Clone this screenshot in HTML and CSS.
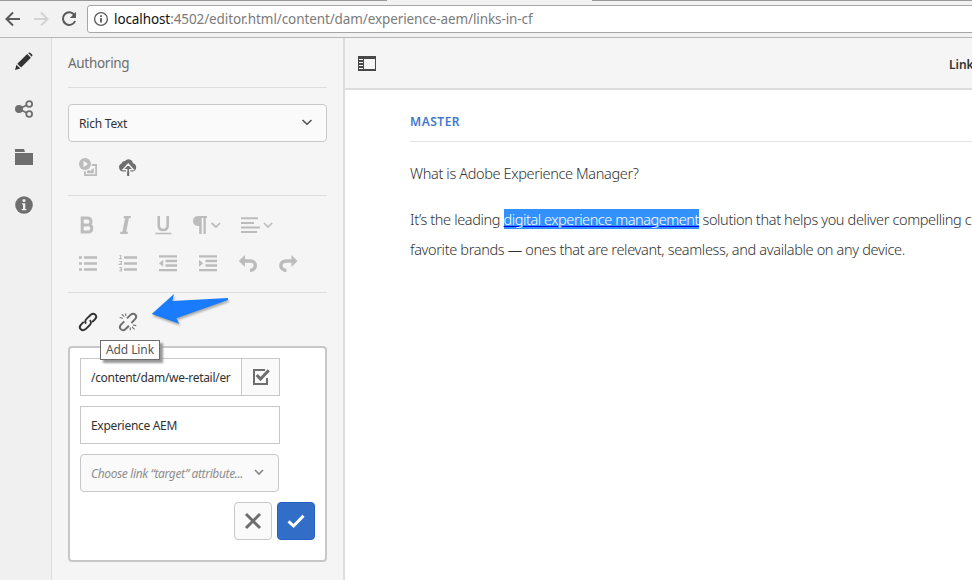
FILE: index.html
```html
<!DOCTYPE html>
<html lang="en">
<head>
<meta charset="utf-8">
<title>Links in CF</title>
<link rel="stylesheet" href="styles.css">
</head>
<body>
<header class="browser">
  <div class="tabs"><i class="tab-line left"></i><i class="tab-line right"></i></div>
  <div class="nav">
    <svg class="nav-icon" width="18" height="18" viewBox="0 0 18 18"><path d="M16 9H3M9 2.5L2.5 9L9 15.5" fill="none" stroke="#5a5a5a" stroke-width="2"/></svg>
    <svg class="nav-icon" width="18" height="18" viewBox="0 0 18 18"><path d="M2 9H15M9 2.5L15.5 9L9 15.5" fill="none" stroke="#d3d3d3" stroke-width="2"/></svg>
    <svg class="nav-icon" width="18" height="18" viewBox="0 0 18 18"><path d="M14.4 5A6.3 6.3 0 1 0 15.1 11" fill="none" stroke="#5a5a5a" stroke-width="2"/><path d="M16 1.8V8H9.8Z" fill="#5a5a5a"/></svg>
    <div class="address">
      <svg width="16" height="16" viewBox="0 0 16 16"><circle cx="8" cy="8" r="6.4" fill="none" stroke="#5a5a5a" stroke-width="1.3"/><path d="M8 7V11.5M8 4.2V6" stroke="#5a5a5a" stroke-width="1.8"/></svg>
      <span class="url"><b>localhost</b>:4502/editor.html/content/dam/experience-aem/links-in-cf</span>
    </div>
  </div>
</header>
<div class="app">
  <nav class="rail">
    <svg width="18" height="18" viewBox="0 0 18 18" fill="#323232"><path d="M0 18L1.5 12.7L5.2 16.4ZM2.3 11.8L12.2 2L15.9 5.7L6.1 15.6ZM13.1 1.1Q14.3-.1 15.5.9L17.2 2.6Q18 3.5 16.8 4.8Z"/></svg>
    <svg width="18" height="18" viewBox="0 0 18 18"><path d="M4 9L14 4M4 9L14 14" stroke="#6e6e6e" stroke-width="1.8"/><circle cx="4" cy="9" r="4" fill="#6e6e6e"/><circle cx="14.2" cy="4" r="2.9" fill="#f0f0f0" stroke="#6e6e6e" stroke-width="1.8"/><circle cx="14.2" cy="14" r="2.9" fill="#f0f0f0" stroke="#6e6e6e" stroke-width="1.8"/></svg>
    <svg width="18" height="18" viewBox="0 0 18 18" fill="#6e6e6e"><path d="M0 1H9L10 4H0ZM0 5H18V17H0Z"/></svg>
    <svg width="18" height="18" viewBox="0 0 18 18"><circle cx="9" cy="9" r="8.8" fill="#6e6e6e"/><path d="M7 7.3H10.3V13H11.5V14.3H6.7V13H8V8.5H7Z" fill="#f0f0f0"/><circle cx="9" cy="4.4" r="1.5" fill="#f0f0f0"/></svg>
  </nav>
  <aside class="panel">
    <h2 class="panel-title">Authoring</h2>
    <div class="select main"><span>Rich Text</span><svg width="12" height="8" viewBox="0 0 12 8"><path d="M1.5 1L6 5.3L10.5 1" fill="none" stroke="#505050" stroke-width="1.5"/></svg></div>
    <div class="tools media">
      <svg width="18" height="18" viewBox="0 0 18 18"><circle cx="6" cy="6" r="6" fill="#bcbcbc"/><path d="M4.5 2.8V9.2L9 6Z" fill="#f5f5f5"/><path d="M12.8 7H17.1V17.1H6V13.2" fill="none" stroke="#bcbcbc" stroke-width="1.8"/><path d="M8 15.2V13L9.5 12L11.3 13L14.8 9.8V15.2Z" fill="#bcbcbc"/></svg>
      <svg width="18" height="18" viewBox="0 0 18 18"><path d="M4.5 13.5A4.2 4.2 0 0 1 2.5 5.5A3.2 3.2 0 0 1 6 3A4.5 4.5 0 0 1 14 5.2A4.3 4.3 0 0 1 14 13.5H11V15H7.5V13.5Z" fill="#6e6e6e"/><path d="M9.2 6L14.3 11.6H10.7V18H7.7V11.6H4.1Z" fill="#6e6e6e" stroke="#f5f5f5" stroke-width="1.3"/><path d="M8.2 14H10.2V18H8.2Z" fill="#6e6e6e"/></svg>
    </div>
    <div class="formats">
      <div class="tools format-row">
        <svg class="bold" width="18" height="18" viewBox="0 0 18 18"><path d="M3.2 2V16H8.4Q12.8 16 12.8 12.2Q12.8 9.5 10 8.8Q12 8 12 5.7Q12 2 8 2ZM4 9H8.5" fill="none" stroke="#bcbcbc" stroke-width="3"/></svg>
        <svg class="italic" width="18" height="18" viewBox="0 0 18 18" fill="#bcbcbc"><path d="M5 0H12L11.6 2.2H9.9L7.2 15.8H9L8.6 18H1L1.4 15.8H3.4L6.1 2.2H4.5Z"/></svg>
        <svg class="under" width="18" height="18" viewBox="0 0 18 18"><path d="M3.7 0V9Q3.7 14 8.2 14Q12.7 14 12.7 9V0" fill="none" stroke="#bcbcbc" stroke-width="2.6"/><path d="M.5 17.5H16.5" stroke="#bcbcbc" stroke-width="1.6"/></svg>
        <svg class="para" width="28" height="18" viewBox="0 0 28 18"><path d="M6.5 0H15V2H13.8V18H11.5V2H9.7V18H7.2V10H5.5Q1 9.2 1 5Q1 0 6.5 0Z" fill="#bcbcbc"/><path d="M19.5 7L24 11L28 7" fill="none" stroke="#bcbcbc" stroke-width="1.7"/></svg>
        <svg class="align" width="33" height="18" viewBox="0 0 33 18"><path d="M1 2.2H18M1 7H14M1 11.6H20M1 16H17" stroke="#bcbcbc" stroke-width="2"/><path d="M24 7L28 11L32.2 7" fill="none" stroke="#bcbcbc" stroke-width="1.7"/></svg>
      </div>
      <div class="tools list-row">
        <svg width="18" height="18" viewBox="0 0 18 18" stroke="#bcbcbc" fill="#bcbcbc"><path d="M5 3.5H18M5 9.5H18M5 15.5H18" stroke-width="2.4"/><path d="M0 3.5H3M0 9.5H3M0 15.5H3" stroke-width="2.6"/></svg>
        <svg width="18" height="18" viewBox="0 0 18 18" stroke="#bcbcbc" fill="none"><path d="M5 3.5H18M5 9.5H18M5 15.5H18" stroke-width="2.4"/><path d="M.5 1.5H1.7V4.5M.2 4.6H3M.3 7.5H2.5V9L.5 10.5H3M.3 13.5H2.5V17H.3M.8 15.2H2.5" stroke-width="1.1"/></svg>
        <svg width="18" height="18" viewBox="0 0 18 18"><path d="M0 2.3H18M6.5 7H18M6.5 11.5H18M0 16.2H18" stroke="#bcbcbc" stroke-width="2.3"/><path d="M4.2 5.8V12.8L0 9.3Z" fill="#bcbcbc"/></svg>
        <svg width="18" height="18" viewBox="0 0 18 18"><path d="M0 2.3H18M6.5 7H18M6.5 11.5H18M0 16.2H18" stroke="#bcbcbc" stroke-width="2.3"/><path d="M0 5.8V12.8L4.2 9.3Z" fill="#bcbcbc"/></svg>
        <svg width="18" height="18" viewBox="0 0 18 18"><path d="M6 1V13L-.2 7Z" fill="#bcbcbc"/><path d="M5 7H11.5C18 7 18 16 11 16.5" fill="none" stroke="#bcbcbc" stroke-width="3.5"/></svg>
        <svg width="18" height="18" viewBox="0 0 18 18"><path d="M12.5 1V13L18.5 7Z" fill="#bcbcbc"/><path d="M13 7H7.5C0 7 0 16 7.5 16.5" fill="none" stroke="#bcbcbc" stroke-width="3.5"/></svg>
      </div>
    </div>
    <div class="tools links">
      <svg width="20" height="20" viewBox="0 0 20 20" fill="none" stroke="#323232" stroke-width="1.9"><path d="M8 11.7C6.5 9.8 7.3 8 9 6.4L12.8 2.8C16 0 20 3.7 17.2 7L14.2 10.2"/><path d="M11.8 8.1C13.8 10 13.1 11.9 11.4 13.5L7.6 17.1C4 20 0 16.2 2.8 12.8L5.7 9.8"/></svg>
      <svg width="20" height="20" viewBox="0 0 20 20" fill="none" stroke="#6e6e6e" stroke-width="1.9"><path d="M9 6.4L12.4 2.9C16.4 0 20 4 17.1 7.2L13.4 11M6.3 9.3L2.8 12.8C0 16.4 4.5 20 7.6 17L11 13.7"/><path d="M1.7 5.5L4.8 6.3M3.7 2.2L6.2 4.7M7.5 1.5L7.9 4M12.3 15.5V18.3M14 14.8L16.6 17.4M15 13L18.2 13.6" stroke-width="1.1"/></svg>
      <span class="tooltip">Add Link</span>
      <svg class="pointer" width="84" height="38" viewBox="0 0 84 38"><path d="M4.7 22L27 2L25.3 9L81 6L81 8L29.3 26.3L32.3 31.7Z" fill="#1b7bfd"/></svg>
    </div>
    <form class="link-form">
      <div class="path-field"><div class="input path"><span>/content/dam/we-retail/er</span></div><div class="browse"><svg width="18" height="18" viewBox="0 0 18 18" fill="none" stroke="#6e6e6e"><path d="M13 2H2V16H15V10" stroke-width="2"/><path d="M4.7 7L8.5 11L16.8 2.3" stroke-width="3"/></svg></div></div>
      <div class="input"><span>Experience AEM</span></div>
      <div class="select target"><span>Choose link “target” attribute...</span><svg width="12" height="8" viewBox="0 0 12 8"><path d="M2 1L6 5L10 1" fill="none" stroke="#858585" stroke-width="1.6"/></svg></div>
      <div class="actions">
        <div class="btn"><svg width="18" height="18" viewBox="0 0 18 18"><path d="M2 2L16 16M16 2L2 16" stroke="#6e6e6e" stroke-width="3"/></svg></div>
        <div class="btn primary"><svg width="18" height="18" viewBox="0 0 18 18"><path d="M1.5 9.3L6.6 14L16.5 3.8" fill="none" stroke="#fff" stroke-width="3"/></svg></div>
      </div>
    </form>
  </aside>
  <main class="content">
    <div class="content-bar">
      <svg width="18" height="15" viewBox="0 0 18 15"><path d="M0 0H18V15H0Z" fill="#484848"/><path d="M6 3H17V13H6Z" fill="#f5f5f5"/><path d="M1 3.5H5M1 6.5H5M1 9.5H5M1 12.5H5" stroke="#f5f5f5"/></svg>
      <b class="doc-title">Links</b>
    </div>
    <article class="doc">
      <h1>MASTER</h1>
      <p>What is Adobe Experience Manager?</p>
      <p>It’s the leading <a class="selected">digital experience management</a> solution that helps you deliver compelling c<br><span class="second">favorite brands — ones that are relevant, seamless, and available on any device.</span></p>
    </article>
  </main>
</div>
</body>
</html>
```
FILE: styles.css
```css
* { box-sizing: border-box; }
body { margin: 0; width: 972px; height: 580px; overflow: hidden; background: #fff; font-family: "Noto Sans", "Open Sans", sans-serif; color: #323232; }
svg { display: block; flex: none; overflow: visible; }
span, b, a { white-space: pre; }
.browser { height: 38px; background: #f2f2f2; border-bottom: 1px solid #b6b6b6; }
.tabs { display: flex; justify-content: space-between; height: 5px; }
.tab-line { height: 1px; background: #999; }
.tab-line.left { width: 387px; }
.tab-line.right { width: 380px; }
.nav { display: flex; align-items: center; height: 28px; padding-left: 4px; }
.nav-icon { margin-right: 10px; }
.address { display: flex; align-items: center; gap: 5px; width: 900px; flex: none; height: 28px; margin-left: -1px; padding-left: 5px; background: #fff; border: 1px solid #a6a6a6; border-radius: 3px; }
.url { font-size: 13.5px; color: #7b7b7b; letter-spacing: -.1px; }
.url b { font-weight: 400; color: #111; }
.app { display: flex; height: 542px; }
.rail { display: flex; flex-direction: column; align-items: center; gap: 30px; width: 52px; flex: none; padding: 14px 4px 0 0; background: #f0f0f0; border-right: 1px solid #dcdcdc; }
.panel { width: 293px; flex: none; padding: 0 17px 0 16px; background: #f5f5f5; border-right: 2px solid #ddd; }
.panel-title { width: 259px; height: 50px; margin: 0; line-height: 50px; border-bottom: 1px solid #ddd; font-size: 13.5px; font-weight: 400; letter-spacing: -.3px; color: #6e6e6e; }
.select { display: flex; align-items: center; justify-content: space-between; height: 38px; border: 1px solid #c8c8c8; border-radius: 4px; background: #fafafa; }
.select.main { width: 259px; margin-top: 16px; padding: 0 13px 0 10px; font-size: 12px; letter-spacing: -.2px; }
.tools { display: flex; align-items: center; }
.media { gap: 22px; height: 54px; width: 259px; padding: 0 0 4px 11px; border-bottom: 1px solid #ddd; }
.formats { height: 97px; width: 259px; padding-top: 20px; border-bottom: 1px solid #ddd; }
.format-row { height: 18px; padding-left: 11px; }
.italic { margin-left: 22px; }
.under { margin-left: 18px; }
.para { margin-left: 19px; }
.align { margin-left: 20px; }
.list-row { height: 18px; gap: 22px; margin-top: 20px; padding-left: 11px; }
.links { position: relative; gap: 20px; height: 53px; padding: 5px 0 0 10px; }
.tooltip { position: absolute; left: 32px; top: 47px; z-index: 2; display: flex; align-items: center; width: 60px; height: 20px; padding: 0 0 1px 5px; border: 1px solid #6e6e6e; background: #fff; box-shadow: 3px 3px 2px #999; font-size: 12px; letter-spacing: -.1px; color: #555; }
.pointer { position: absolute; left: 79px; top: -1px; filter: drop-shadow(1px 2px 1px #aaa); }
.link-form { width: 259px; height: 216px; padding: 10px; background: #fff; border: 2px solid #c8c8c8; border-radius: 4px; }
.path-field { display: flex; }
.input { display: flex; align-items: center; width: 200px; height: 38px; padding-left: 10px; background: #fff; border: 1px solid #c8c8c8; font-size: 12px; letter-spacing: -.3px; overflow: hidden; }
.input.path { width: 162px; }
.browse { display: flex; align-items: center; justify-content: center; width: 38px; height: 38px; border: 1px solid #c8c8c8; border-left: 0; background: #fafafa; }
.path-field + .input { margin-top: 10px; }
.select.target { width: 199px; margin-top: 10px; padding: 0 13px 0 10px; font-size: 12px; font-style: italic; letter-spacing: -.37px; color: #8e8e8e; }
.actions { display: flex; justify-content: flex-end; gap: 5px; margin-top: 10px; }
.btn { display: flex; align-items: center; justify-content: center; width: 38px; height: 38px; border: 1px solid #c8c8c8; border-radius: 4px; background: #fafafa; }
.btn.primary { background: #326ec8; border-color: #2362c4; }
.content { flex: 1; min-width: 0; overflow: hidden; }
.content-bar { display: flex; align-items: center; height: 52px; padding-left: 13px; background: #f5f5f5; border-bottom: 2px solid #ddd; font-size: 12px; }
.doc-title { margin: 2px 0 0 573px; font-weight: 600; }
.doc { padding: 15px 0 0 65px; }
h1 { height: 37px; margin: 0; line-height: 34px; border-bottom: 1px solid #e2e2e2; font-size: 12px; font-weight: 600; letter-spacing: .5px; color: #3f78cc; }
.doc p { margin: 16px 0 0; font-size: 14.5px; line-height: 30px; font-weight: 300; letter-spacing: -.36px; white-space: nowrap; }
.second { letter-spacing: -.34px; }
.selected { display: inline-block; height: 20px; line-height: 20px; background: #3390ff; color: #fff; letter-spacing: -.45px; text-decoration: underline; text-decoration-color: #0000ee; }
```
